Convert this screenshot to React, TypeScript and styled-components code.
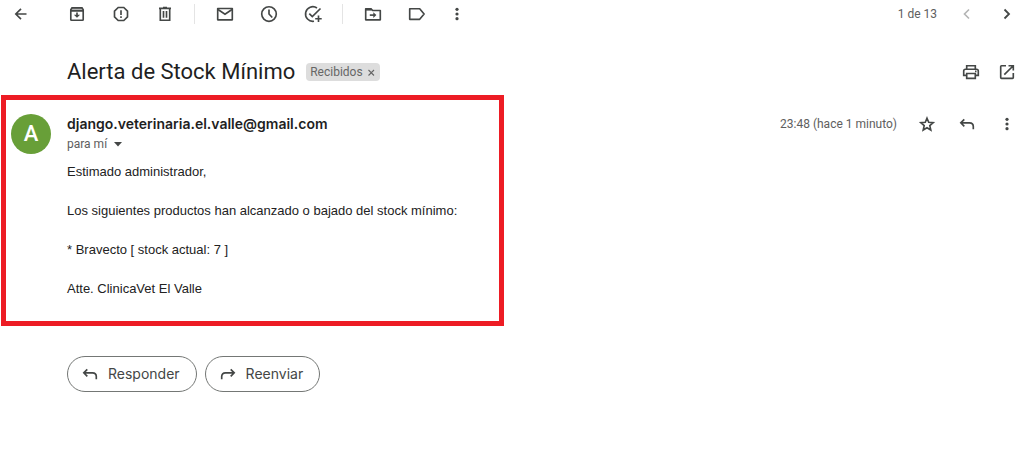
import React from "react";
import styled, { createGlobalStyle } from "styled-components";

const GlobalStyle = createGlobalStyle`
  * { box-sizing: border-box; }
  body {
    margin: 0;
    background: #fff;
    color: #1f1f1f;
    font-family: Roboto, "Liberation Sans", sans-serif;
  }
  h1, p { margin: 0; font-weight: 400; }
`;

const Toolbar = styled.header`
  display: flex;
  align-items: center;
  justify-content: space-between;
  height: 28px;
  padding: 0 8px 0 11px;
`;

const Group = styled.div<{ $gap: number }>`
  display: flex;
  align-items: center;
  gap: ${(p) => p.$gap}px;
`;

const Divider = styled.span`
  width: 1px;
  height: 20px;
  margin-left: -1px;
  background: #e4e4e4;
`;

const IconButton = styled.button`
  display: flex;
  flex: none;
  width: 20px;
  height: 20px;
  padding: 0;
  border: 0;
  background: none;
  color: #444746;
  cursor: pointer;
  &:disabled { color: #b4b5b5; cursor: default; }
`;

const Glyph = styled.svg`
  flex: none;
  width: 20px;
  height: 20px;
  fill: none;
  stroke: currentColor;
  stroke-width: 1.65;
`;

const Small = styled.span`
  font-size: 12px;
  line-height: 20px;
  color: #5e5e5e;
  white-space: nowrap;
`;

const Subject = styled.section`
  display: flex;
  align-items: center;
  justify-content: space-between;
  margin-top: 30px;
  padding: 0 8px 0 67px;
`;

const Title = styled.h1`
  font-size: 22px;
  line-height: 28px;
`;

const Tag = styled.span`
  display: flex;
  align-items: center;
  gap: 4px;
  height: 18px;
  padding: 0 4px;
  border-radius: 4px;
  background: #ddd;
  color: #666;
  font-size: 12px;
`;

const TagClose = styled.button`
  display: flex;
  padding: 0;
  border: 0;
  background: none;
  color: #666;
  cursor: pointer;
  svg { width: 9px; height: 9px; }
`;

const Message = styled.article`
  display: flex;
  align-items: flex-start;
  justify-content: space-between;
  margin-top: 9px;
  padding: 0 8px 0 1px;
`;

const Highlight = styled.div`
  display: flex;
  flex: 0 1 503px;
  gap: 16px;
  padding: 14px 5px 22px;
  border: 5px solid #ed1c24;
`;

const Avatar = styled.div`
  flex: none;
  width: 40px;
  height: 40px;
  border-radius: 50%;
  background: #689f38;
  color: #fff;
  font-size: 22px;
  font-weight: 500;
  line-height: 40px;
  text-align: center;
`;

const Sender = styled.p`
  font-size: 14px;
  font-weight: 600;
  font-family: Inter, Roboto, sans-serif;
  line-height: 20px;
`;

const Recipient = styled.button`
  display: flex;
  align-items: center;
  gap: 6px;
  height: 20px;
  padding: 0;
  border: 0;
  background: none;
  font: inherit;
  color: #444746;
  cursor: pointer;
  svg { width: 10px; height: 5px; }
`;

const Body = styled.div`
  display: grid;
  gap: 19px;
  margin-top: 8px;
  color: #222;
  font-family: "Liberation Sans", Arial, sans-serif;
  font-size: 13px;
  line-height: 20px;
`;

const Meta = styled.div`
  display: flex;
  align-items: center;
  gap: 20px;
  padding-top: 19px;
`;

const Actions = styled.footer`
  display: flex;
  gap: 8px;
  padding: 30px 8px 30px 67px;
`;

const ActionButton = styled.button`
  display: flex;
  align-items: center;
  gap: 8px;
  height: 36px;
  padding: 0 16px 0 12px;
  border: 1px solid #747775;
  border-radius: 18px;
  background: #fff;
  color: #444746;
  font-family: Inter, Roboto, sans-serif;
  font-size: 14px;
  font-weight: 400;
  line-height: 20px;
  cursor: pointer;
`;

const icons = {
  back: <path d="M15.500 10H5M10 4.800 4.800 10l5.200 5.200" />,
  archive: (
    <>
      <path d="M4.500 4h11v2.500h-11z" fill="#b5b5b5" stroke="none" />
      <path d="M5 3.800h10l1.200 2V15.500q0 .7-.7.7H4.500q-.7 0-.7-.7V5.800zM3.800 6.900h12.400" />
      <path d="M10 8.500v3" />
      <path d="M6.900 10.700h6.200L10 13.800z" fill="currentColor" stroke="none" />
    </>
  ),
  spam: (
    <>
      <path d="M7.200 3.500h5.600l3.700 3.700v5.600l-3.700 3.700H7.200l-3.700-3.700V7.200z" />
      <path d="M10 6.200v4.800M10 12.300v1.600" />
    </>
  ),
  trash: (
    <>
      <path d="M4 4.300h12M8 3.500h4M5.300 4.500v11.700h9.400V4.500" />
      <path d="M8.500 7v6.800M11.500 7v6.800" />
    </>
  ),
  mail: (
    <>
      <path d="M2.700 4.500h14.600v11.300H2.700z" strokeLinejoin="round" />
      <path d="m3 5.500 7 4.700 7-4.700" />
    </>
  ),
  clock: (
    <>
      <circle cx="10" cy="10" r="7.300" />
      <path d="M10 5.500V10l3.300 3.500" />
    </>
  ),
  task: (
    <>
      <path d="M14 4A7.300 7.300 0 1 0 11 17.200" />
      <path d="m6.300 9.600 3 3L17.500 4.500M15.500 11.500v6.500M12.200 14.700h6.500" />
    </>
  ),
  move: (
    <>
      <path d="M2.700 4.700H8l1.700 1.800h7.600v9.300H2.700z" strokeLinejoin="round" />
      <path d="M2.700 5.600h6" strokeWidth="2" />
      <path d="M6.800 11.100h5" />
      <path d="M10.300 8.200v5.800l3.100-2.900z" fill="currentColor" stroke="none" />
    </>
  ),
  label: <path d="M2.700 4.700h10l4.400 5.300-4.400 5.300h-10z" strokeLinejoin="round" />,
  more: (
    <g fill="currentColor" stroke="none">
      <circle cx="10" cy="5.300" r="1.600" />
      <circle cx="10" cy="10" r="1.600" />
      <circle cx="10" cy="14.700" r="1.600" />
    </g>
  ),
  prev: <path d="M12 5.500 7.500 10l4.500 4.500" />,
  next: <path d="m7.500 5.500 4.500 4.500-4.500 4.500" strokeWidth="1.800" />,
  print: (
    <>
      <path d="M5.700 7V3.700h8.600V7M5.500 13.300H2.700V9q0-1.800 1.800-1.800h11q1.800 0 1.800 1.800v4.300h-2.800" />
      <path d="M5.700 11.500h8.600v4.800H5.700z" />
      <path d="M14 9.300h1.500" />
    </>
  ),
  open: <path d="M9 3.700H4.500q-.8 0-.8.800v11q0 .8.800.800h11q.8 0 .8-.8V11M11.500 3.700h4.800v4.800M16 4l-8.700 8.700" />,
  star: (
    <path d="m10 4.200 1.700 4 4.500.4-3.400 3 1 4.400-3.800-2.300L6.200 16l1-4.400-3.400-3 4.500-.4z" />
  ),
  reply: <path d="M7.300 5.300 3.800 8.800l3.500 3.500M4 8.800h8.500q3.800 0 3.800 3.800v2.600" />,
  forward: <path d="m12.700 5.300 3.500 3.500-3.500 3.500M16 8.800H7.500q-3.800 0-3.800 3.800v2.600" />,
};

type IconName = keyof typeof icons;

const Icon = ({ name }: { name: IconName }) => (
  <Glyph viewBox="0 0 20 20" aria-hidden="true">{icons[name]}</Glyph>
);

const Tool = ({ name, label, disabled }: { name: IconName; label: string; disabled?: boolean }) => (
  <IconButton type="button" aria-label={label} disabled={disabled}>
    <Icon name={name} />
  </IconButton>
);

const paragraphs = [
  "Estimado administrador,",
  "Los siguientes productos han alcanzado o bajado del stock mínimo:",
  "* Bravecto [ stock actual: 7 ]",
  "Atte. ClinicaVet El Valle",
];

export default function App() {
  return (
    <>
      <GlobalStyle />
      <Toolbar>
        <Group $gap={36}>
          <Tool name="back" label="Volver" />
          <Group $gap={20}>
            <Group $gap={24}>
              <Tool name="archive" label="Archivar" />
              <Tool name="spam" label="Marcar como spam" />
              <Tool name="trash" label="Eliminar" />
            </Group>
            <Divider />
            <Group $gap={24}>
              <Tool name="mail" label="Marcar como no leído" />
              <Tool name="clock" label="Posponer" />
              <Tool name="task" label="Añadir a tareas" />
            </Group>
            <Divider />
            <Group $gap={24}>
              <Tool name="move" label="Mover a" />
              <Tool name="label" label="Etiquetas" />
            </Group>
            <Tool name="more" label="Más" />
          </Group>
        </Group>
        <Group $gap={20}>
          <Small>1 de 13</Small>
          <Tool name="prev" label="Más reciente" disabled />
          <Tool name="next" label="Anterior" />
        </Group>
      </Toolbar>
      <main>
        <Subject>
          <Group $gap={11}>
            <Title>Alerta de Stock Mínimo</Title>
            <Tag>
              Recibidos
              <TagClose type="button" aria-label="Quitar etiqueta">
                <Glyph viewBox="0 0 9 9" aria-hidden="true">
                  <path d="m1.500 2 5.500 5.500m0-5.500-5.500 5.500" strokeWidth="1.100" />
                </Glyph>
              </TagClose>
            </Tag>
          </Group>
          <Group $gap={16}>
            <Tool name="print" label="Imprimir" />
            <Tool name="open" label="Abrir en ventana nueva" />
          </Group>
        </Subject>
        <Message>
          <Highlight>
            <Avatar>A</Avatar>
            <div>
              <Sender>django.veterinaria.el.valle@gmail.com</Sender>
              <Recipient type="button">
                <Small>para mí</Small>
                <svg viewBox="0 0 10 5" aria-hidden="true">
                  <path d="M1 0h8L5 4.500z" fill="#444746" />
                </svg>
              </Recipient>
              <Body>
                {paragraphs.map((text) => (
                  <p key={text}>{text}</p>
                ))}
              </Body>
            </div>
          </Highlight>
          <Meta>
            <Small>23:48 (hace 1 minuto)</Small>
            <Tool name="star" label="Destacar" />
            <Tool name="reply" label="Responder" />
            <Tool name="more" label="Más opciones" />
          </Meta>
        </Message>
        <Actions>
          <ActionButton type="button">
            <Icon name="reply" />
            Responder
          </ActionButton>
          <ActionButton type="button">
            <Icon name="forward" />
            Reenviar
          </ActionButton>
        </Actions>
      </main>
    </>
  );
}
